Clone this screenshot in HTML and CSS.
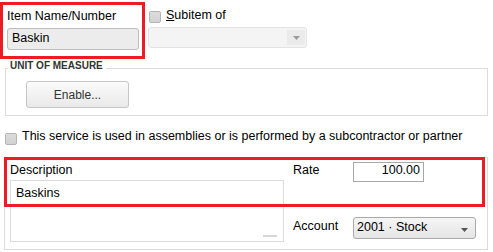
FILE: index.html
```html
<!DOCTYPE html>
<html>
<head>
<meta charset="utf-8">
<link rel="stylesheet" href="styles.css">
</head>
<body>
<div class="top">
  <div class="name-box">
    <div class="lbl">Item Name/Number</div>
    <div class="name-input">Baskin</div>
  </div>
  <div class="subitem">
    <div class="chk-row"><span class="chk"></span><span><u>S</u>ubitem of</span></div>
    <div class="combo-dis"><span class="arrow-cell"><svg width="7" height="4" viewBox="0 0 7 4"><path d="M0 0H7L3.5 4Z" fill="#9a9a9a"/></svg></span></div>
  </div>
</div>
<fieldset class="uom">
  <legend>UNIT OF MEASURE</legend>
  <button class="btn">Enable...</button>
</fieldset>
<div class="svc-row"><span class="chk"></span><span>This service is used in assemblies or is performed by a subcontractor or partner</span></div>
<div class="panel">
  <div class="desc-col">
    <div class="lbl desc-lbl">Description</div>
    <div class="textarea"><span>Baskins</span><span class="grip"></span></div>
  </div>
  <div class="right-col">
    <div class="row rate-row"><span class="rlbl">Rate</span><div class="rate">100.00</div></div>
    <div class="row acct-row"><span class="rlbl">Account</span><div class="acct"><span>2001 · Stock</span><svg width="7" height="4" viewBox="0 0 7 4"><path d="M0 0H7L3.5 4Z" fill="#555"/></svg></div></div>
  </div>
  <div class="hl"></div>
</div>
</body>
</html>
```
FILE: styles.css
```css
* { box-sizing: border-box; }
html, body { margin: 0; background: #fff; }
body {
  font-family: "Liberation Sans", Arial, sans-serif;
  font-size: 12.5px;
  line-height: 15px;
  color: #000;
  width: 493px;
  height: 252px;
  overflow: hidden;
}
.top { display: flex; align-items: flex-start; }
.name-box {
  margin-top: 2px;
  width: 145px;
  border: 3px solid #ed1c24;
  padding: 4px 3px 6px 4px;
}
.lbl { line-height: 15px; }
.name-input {
  margin-top: 4px;
  height: 22px;
  background: #ececec;
  border: 1px solid #bdbdbd;
  border-radius: 3px;
  padding: 2px 4px 0;
}
.subitem { margin-left: 3px; display: flex; flex-direction: column; }
.chk-row { display: flex; align-items: flex-start; margin-top: 8px; margin-left: 1px; gap: 5px; }
.chk {
  width: 12px; height: 12px;
  margin-top: 3px;
  border: 1px solid #b4b4b4;
  border-radius: 2px;
  background: linear-gradient(#dcdcdc, #d2d2d2);
  flex: none;
}
.combo-dis {
  margin-top: 4px;
  width: 159px; height: 21px;
  background: #f4f4f4;
  border: 1px solid #e4e4e4;
  border-radius: 3px;
  display: flex; justify-content: flex-end; align-items: center;
  padding-right: 1px;
}
.arrow-cell {
  width: 18px; height: 15px;
  background: #ebebeb;
  display: flex; align-items: center; justify-content: center;
}
.uom {
  margin: 1px 5px 0;
  border: 1px solid #dcdcdc;
  padding: 0 0 7px 2px;
  min-width: 0;
}
.uom legend {
  font-size: 10px;
  font-weight: bold;
  line-height: 12px;
  padding: 0 3px 5px 2px;
  color: #333;
}
.btn {
  display: block;
  margin: 4px 0 0 18px;
  width: 103px; height: 27px;
  border: 1px solid #c6c6c6;
  border-radius: 3px;
  background: linear-gradient(#fbfbfb, #e9e9e9);
  font-family: "Liberation Sans", Arial, sans-serif;
  font-size: 12px;
  color: #333;
  padding: 0;
}
.svc-row { display: flex; align-items: flex-start; gap: 5px; margin-top: 13px; padding-left: 5px; }
.svc-row .chk { margin-top: 4px; }
.panel {
  position: relative;
  margin: 12px 5px 0 4px;
  border: 1px solid #dcdcdc;
  border-top-color: #e8e8e8;
  padding: 4px 0 7px 5px;
  display: flex;
}
.desc-col { width: 274px; }
.desc-lbl { margin-top: 1px; }
.textarea {
  margin-top: 2px;
  height: 62px;
  border: 1px solid #dcdcdc;
  padding: 5px 5px 4px;
  display: flex; flex-direction: column; justify-content: space-between;
}
.grip { align-self: flex-end; width: 14px; height: 2px; background: #d6d6d6; margin-right: 1px; }
.right-col { margin-left: 9px; display: flex; flex-direction: column; }
.row { display: flex; align-items: flex-start; }
.rlbl { width: 60px; }
.rate-row .rlbl { margin-top: 1px; }
.rate {
  width: 71px; height: 20px;
  border: 1px solid #a8a8a8;
  text-align: right;
  padding: 0 3px 0 0;
}
.acct-row { margin-top: 35px; }
.acct-row .rlbl { margin-top: 2px; }
.acct {
  width: 123px; height: 22px;
  border: 1px solid #a9a9a9;
  border-radius: 3px;
  background: linear-gradient(#f5f5f5, #e5e5e5);
  padding: 2px 7px 0 3px;
  display: flex; justify-content: space-between; align-items: flex-start;
}
.acct svg { margin-top: 8px; }
.hl {
  position: absolute;
  left: -1px; top: -1px;
  width: 481px; height: 50px;
  border: 3px solid #ed1c24;
  pointer-events: none;
}
```
